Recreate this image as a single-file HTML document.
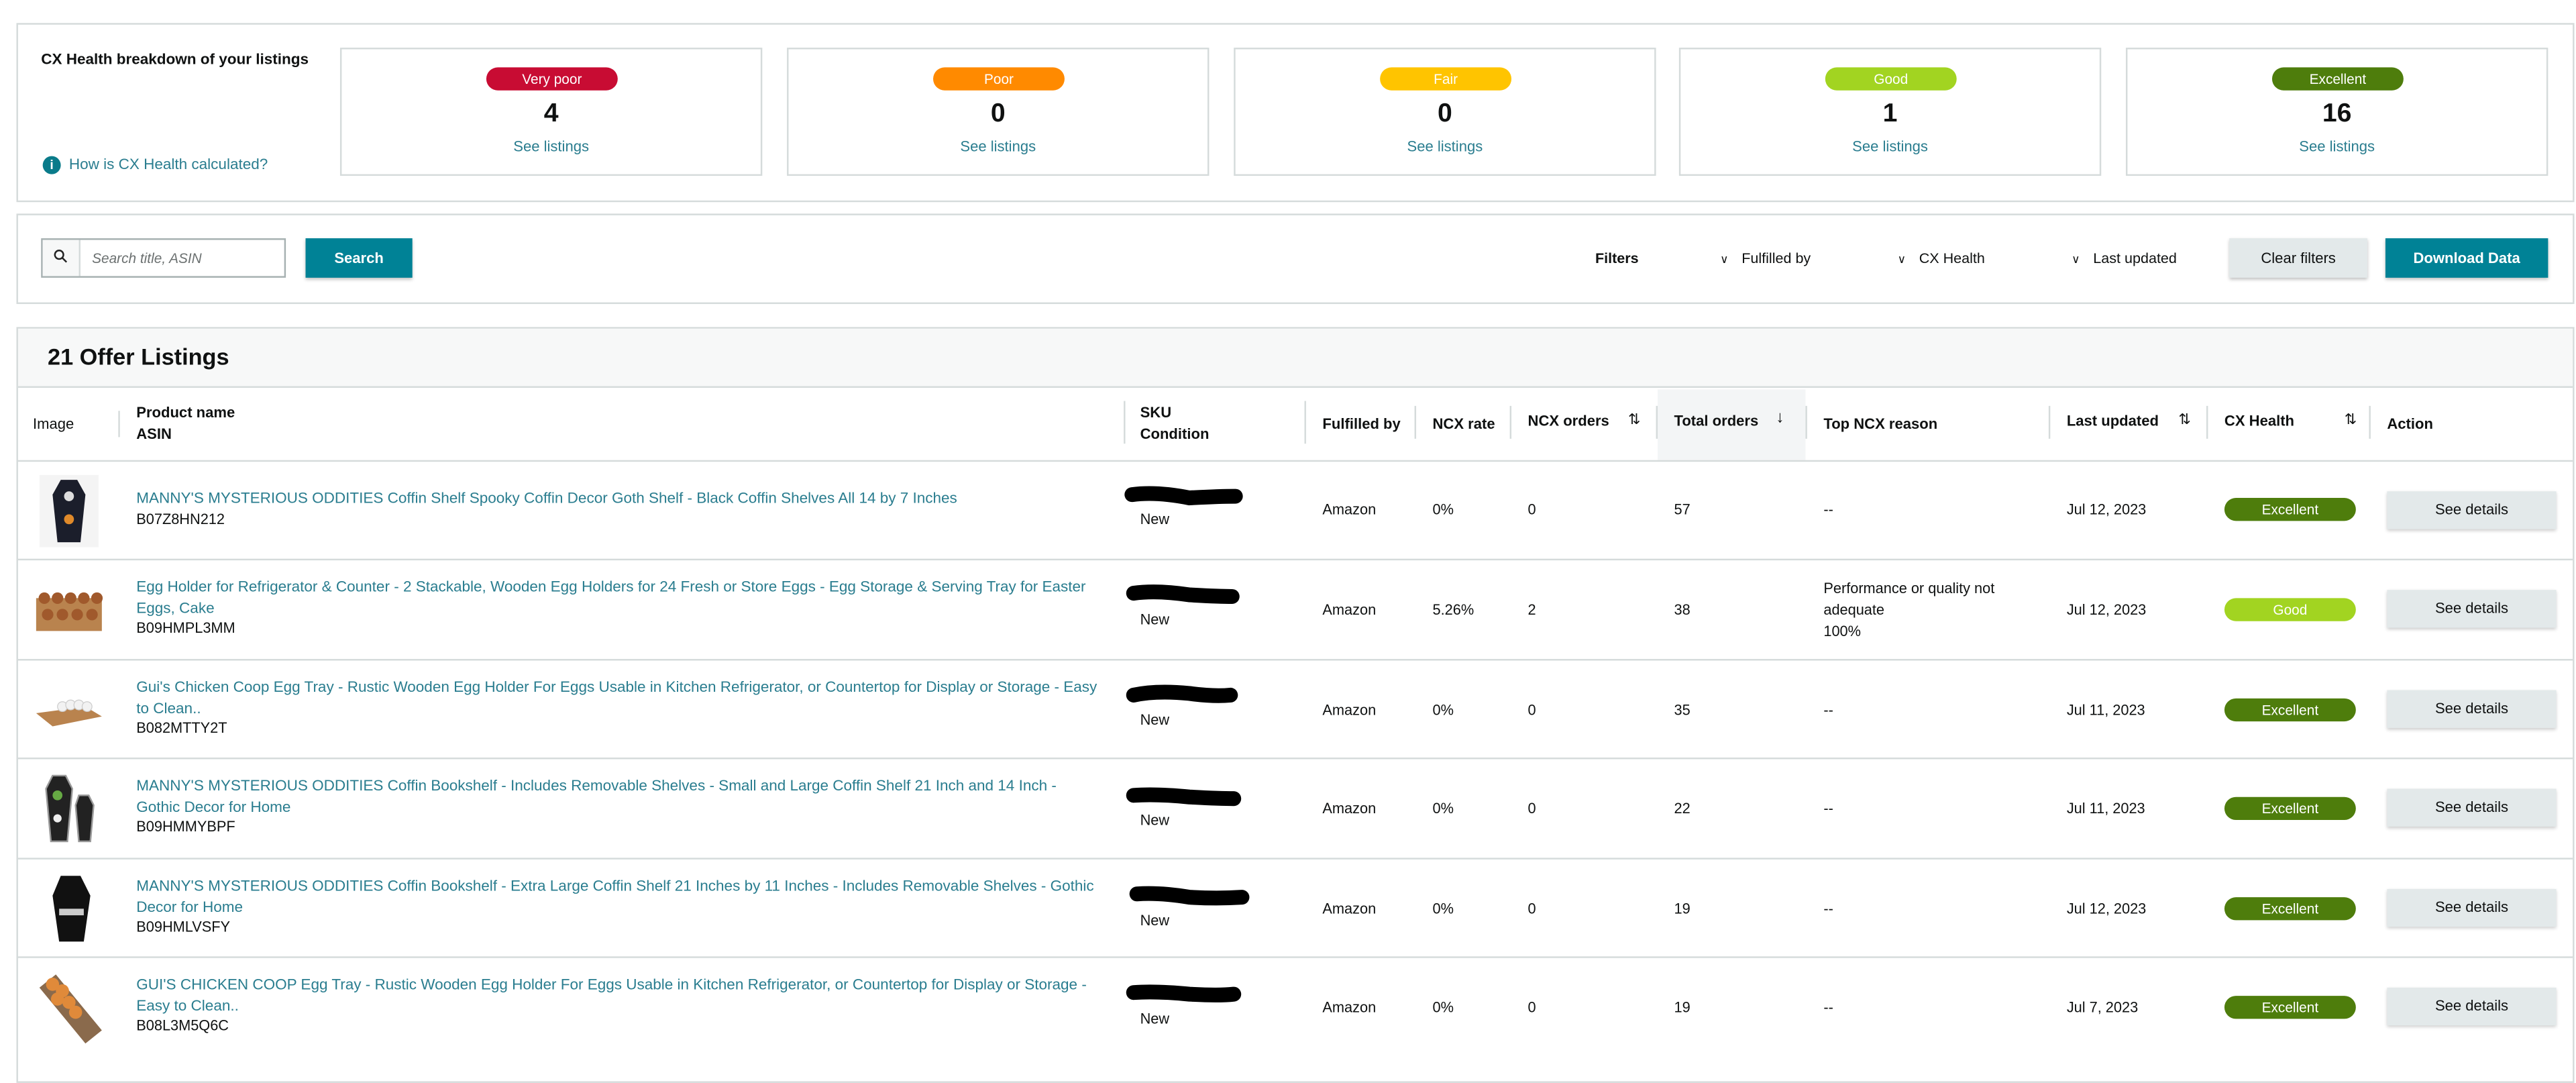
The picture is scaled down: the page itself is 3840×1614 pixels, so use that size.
<!DOCTYPE html>
<html><head><meta charset="utf-8"><style>
*{box-sizing:border-box;margin:0;padding:0}
html,body{width:3840px;height:1572px;overflow:hidden;background:#fff}
#w{position:absolute;left:0;top:0;width:1568px;height:642px;transform:scale(2.44898);transform-origin:0 0;font-family:"Liberation Sans",Arial,sans-serif;color:#0f1111;font-size:9px}
.a{position:absolute}
.card{position:absolute;border:1px solid #d5dbdb;background:#fff}
.box{position:absolute;top:29px;width:257px;height:78px;border:1px solid #d5dbdb;text-align:center}
.pill{position:absolute;left:88px;top:11px;width:80px;height:14px;border-radius:7px;color:#fff;font-size:8.5px;line-height:14px}
.num{position:absolute;left:0;right:0;top:31px;font-size:16px;font-weight:bold;color:#0f1111}
.see{position:absolute;left:0;right:0;top:54px;color:#2a7d8f;font-size:9px}
.btn{position:absolute;top:145px;height:24px;line-height:24px;text-align:center;font-size:9px;box-shadow:0 1px 2px rgba(0,0,0,.25)}
.hd{position:absolute;font-weight:bold;font-size:9px;color:#0f1111}
.sep{position:absolute;width:1px;background:#d5dbdb}
.row{position:absolute;left:10px;width:1556px;height:61px;border-top:1px solid #d5dbdb}
.c{position:absolute;font-size:8.9px;color:#0f1111}
.pn{position:absolute;left:73px;width:591px;color:#2a7d8f;font-size:9.2px;line-height:13px}
.cx{position:absolute;left:1344px;width:80px;height:14px;border-radius:7px;color:#fff;text-align:center;line-height:14px;font-size:8.5px}
.sd{position:absolute;left:1443px;width:103px;height:23px;background:#e3e9ea;line-height:23px;text-align:center;font-size:9px;box-shadow:0 1px 2px rgba(0,0,0,.2)}
.sort{font-weight:normal;font-size:10px;position:absolute}
</style></head><body><div id="w">

<div class="card" style="left:10px;top:14px;width:1557px;height:109px"></div>
<div class="a" style="left:25px;top:31px;font-weight:bold;font-size:9.2px">CX Health breakdown of your listings</div>
<div class="a" style="left:26px;top:95px;width:11px;height:11px;border-radius:50%;background:#0a7b8a;color:#fff;font-size:8px;font-weight:bold;text-align:center;line-height:11px">i</div>
<div class="a" style="left:42px;top:95px;color:#2a7d8f;font-size:9.2px">How is CX Health calculated?</div>

<div class="box" style="left:207px"><div class="pill" style="background:#c80c33">Very poor</div><div class="num">4</div><div class="see">See listings</div></div>
<div class="box" style="left:479px"><div class="pill" style="background:#ff8a00">Poor</div><div class="num">0</div><div class="see">See listings</div></div>
<div class="box" style="left:751px"><div class="pill" style="background:#ffc400">Fair</div><div class="num">0</div><div class="see">See listings</div></div>
<div class="box" style="left:1022px"><div class="pill" style="background:#a2d421">Good</div><div class="num">1</div><div class="see">See listings</div></div>
<div class="box" style="left:1294px"><div class="pill" style="background:#4e7d0c">Excellent</div><div class="num">16</div><div class="see">See listings</div></div>

<div class="card" style="left:10px;top:130px;width:1557px;height:55px"></div>
<div class="a" style="left:25px;top:145px;width:149px;height:24px;border:1px solid #a6b0b1;background:#fff"></div>
<div class="a" style="left:26px;top:146px;width:23px;height:22px;background:#f7f8f8;border-right:1px solid #d5dbdb"></div>
<svg class="a" style="left:32px;top:151px" width="10" height="10" viewBox="0 0 10 10"><circle cx="4" cy="4" r="2.6" fill="none" stroke="#222" stroke-width="1"/><path d="M6 6l2.5 2.5" stroke="#222" stroke-width="1"/></svg>
<div class="a" style="left:56px;top:152px;font-style:italic;color:#6b7070;font-size:8.5px">Search title, ASIN</div>
<div class="btn" style="left:186px;width:65px;background:#008296;color:#fff;font-weight:bold">Search</div>
<div class="a" style="left:971px;top:152px;font-weight:bold;font-size:8.8px">Filters</div>
<div class="a" style="left:1047px;top:152px;font-size:8.8px"><span style="font-size:7px;margin-right:8px">&#8744;</span>Fulfilled by</div>
<div class="a" style="left:1155px;top:152px;font-size:8.8px"><span style="font-size:7px;margin-right:8px">&#8744;</span>CX Health</div>
<div class="a" style="left:1261px;top:152px;font-size:8.8px"><span style="font-size:7px;margin-right:8px">&#8744;</span>Last updated</div>
<div class="btn" style="left:1357px;width:84px;background:#e3e9ea">Clear filters</div>
<div class="btn" style="left:1452px;width:99px;background:#008296;color:#fff;font-weight:bold">Download Data</div>

<div class="card" style="left:10px;top:199px;width:1557px;height:460px"></div>
<div class="a" style="left:11px;top:200px;width:1555px;height:36px;background:#f7f8f8;border-bottom:1px solid #d5dbdb"></div>
<div class="a" style="left:29px;top:209px;font-size:14px;font-weight:bold">21 Offer Listings</div>
<div class="a" style="left:1009px;top:237px;width:90px;height:43px;background:#f3f5f6"></div>
<div class="hd" style="left:20px;top:253px;font-weight:normal">Image</div>
<div class="sep" style="left:72px;top:250px;height:16px"></div>
<div class="hd" style="left:83px;top:246px">Product name</div><div class="hd" style="left:83px;top:259px">ASIN</div>
<div class="sep" style="left:684px;top:244px;height:26px"></div>
<div class="hd" style="left:694px;top:246px">SKU</div><div class="hd" style="left:694px;top:259px">Condition</div>
<div class="sep" style="left:794px;top:244px;height:26px"></div>
<div class="hd" style="left:805px;top:253px">Fulfilled by</div>
<div class="sep" style="left:861px;top:247px;height:20px"></div>
<div class="hd" style="left:872px;top:253px">NCX rate</div>
<div class="sep" style="left:919px;top:247px;height:20px"></div>
<div class="hd" style="left:930px;top:251px">NCX orders</div><span class="sort" style="left:991px;top:250px;font-size:9px">&#8645;</span>
<div class="sep" style="left:1008px;top:247px;height:20px"></div>
<div class="hd" style="left:1019px;top:251px">Total orders</div><span class="sort" style="left:1081px;top:249px">&#8595;</span>
<div class="sep" style="left:1099px;top:247px;height:20px"></div>
<div class="hd" style="left:1110px;top:253px">Top NCX reason</div>
<div class="sep" style="left:1247px;top:247px;height:20px"></div>
<div class="hd" style="left:1258px;top:251px">Last updated</div><span class="sort" style="left:1326px;top:250px;font-size:9px">&#8645;</span>
<div class="sep" style="left:1343px;top:247px;height:20px"></div>
<div class="hd" style="left:1354px;top:251px">CX Health</div><span class="sort" style="left:1427px;top:250px;font-size:9px">&#8645;</span>
<div class="sep" style="left:1442px;top:247px;height:20px"></div>
<div class="hd" style="left:1453px;top:253px">Action</div>

<!-- row 1 -->
<div class="row" style="top:280px">
 <svg class="a" style="left:14px;top:8px" width="36" height="44"><rect x="0" y="0" width="36" height="44" fill="#f4f4f4"/><path d="M13 3h10l5 9-3 29H11L8 12z" fill="#1b1e2b"/><circle cx="18" cy="13" r="3" fill="#ddd"/><circle cx="18" cy="27" r="3" fill="#e08a2a"/></svg>
 <div class="pn" style="top:16px">MANNY'S MYSTERIOUS ODDITIES Coffin Shelf Spooky Coffin Decor Goth Shelf - Black Coffin Shelves All 14 by 7 Inches</div>
 <div class="c" style="left:73px;top:30px">B07Z8HN212</div>
 <svg class="a" style="left:674px;top:14px" width="75" height="16"><path d="M5 6 Q20 4 40 8 Q58 7 68 7" stroke="#000" stroke-width="9" stroke-linecap="round" fill="none"/></svg>
 <div class="c" style="left:684px;top:30px">New</div>
 <div class="c" style="left:795px;top:24px">Amazon</div><div class="c" style="left:862px;top:24px">0%</div><div class="c" style="left:920px;top:24px">0</div><div class="c" style="left:1009px;top:24px">57</div><div class="c" style="left:1100px;top:24px">--</div><div class="c" style="left:1248px;top:24px">Jul 12, 2023</div>
 <div class="cx" style="top:22px;background:#4e7d0c">Excellent</div><div class="sd" style="top:18px">See details</div>
</div>
<!-- row 2 -->
<div class="row" style="top:340px">
 <svg class="a" style="left:10px;top:15px" width="44" height="30"><path d="M2 8h40v20H2z" fill="#b9834e"/><g fill="#a0592c"><circle cx="7" cy="8" r="3.5"/><circle cx="15" cy="8" r="3.5"/><circle cx="23" cy="8" r="3.5"/><circle cx="31" cy="8" r="3.5"/><circle cx="39" cy="8" r="3.5"/><circle cx="9" cy="18" r="3.5"/><circle cx="18" cy="18" r="3.5"/><circle cx="27" cy="18" r="3.5"/><circle cx="36" cy="18" r="3.5"/></g></svg>
 <div class="pn" style="top:10px">Egg Holder for Refrigerator &amp; Counter - 2 Stackable, Wooden Egg Holders for 24 Fresh or Store Eggs - Egg Storage &amp; Serving Tray for Easter Eggs, Cake</div>
 <div class="c" style="left:73px;top:36px">B09HMPL3MM</div>
 <svg class="a" style="left:674px;top:14px" width="75" height="16"><path d="M6 6 Q20 4 40 7 Q58 8 66 8" stroke="#000" stroke-width="9" stroke-linecap="round" fill="none"/></svg>
 <div class="c" style="left:684px;top:31px">New</div>
 <div class="c" style="left:795px;top:25px">Amazon</div><div class="c" style="left:862px;top:25px">5.26%</div><div class="c" style="left:920px;top:25px">2</div><div class="c" style="left:1009px;top:25px">38</div>
 <div class="c" style="left:1100px;top:11px;line-height:13px">Performance or quality not<br>adequate<br>100%</div>
 <div class="c" style="left:1248px;top:25px">Jul 12, 2023</div>
 <div class="cx" style="top:23px;background:#a2d421">Good</div><div class="sd" style="top:18px">See details</div>
</div>
<!-- row 3 -->
<div class="row" style="top:401px">
 <svg class="a" style="left:10px;top:18px" width="44" height="24"><path d="M2 14l30-4 10 6-30 6z" fill="#b9834e"/><g fill="#f2f2f2" stroke="#ccc" stroke-width=".5"><circle cx="18" cy="10" r="3"/><circle cx="23" cy="9" r="3"/><circle cx="28" cy="9" r="3"/><circle cx="33" cy="10" r="3"/></g></svg>
 <div class="pn" style="top:10px">Gui's Chicken Coop Egg Tray - Rustic Wooden Egg Holder For Eggs Usable in Kitchen Refrigerator, or Countertop for Display or Storage - Easy to Clean..</div>
 <div class="c" style="left:73px;top:36px">B082MTTY2T</div>
 <svg class="a" style="left:674px;top:14px" width="75" height="16"><path d="M6 7 Q20 4 40 6 Q55 8 65 7" stroke="#000" stroke-width="9" stroke-linecap="round" fill="none"/></svg>
 <div class="c" style="left:684px;top:31px">New</div>
 <div class="c" style="left:795px;top:25px">Amazon</div><div class="c" style="left:862px;top:25px">0%</div><div class="c" style="left:920px;top:25px">0</div><div class="c" style="left:1009px;top:25px">35</div><div class="c" style="left:1100px;top:25px">--</div><div class="c" style="left:1248px;top:25px">Jul 11, 2023</div>
 <div class="cx" style="top:23px;background:#4e7d0c">Excellent</div><div class="sd" style="top:18px">See details</div>
</div>
<!-- row 4 -->
<div class="row" style="top:461px">
 <svg class="a" style="left:14px;top:8px" width="36" height="44"><path d="M8 2h8l4 8-3 32H7L4 10z" fill="#222" stroke="#999"/><path d="M24 14h6l3 6-2 22h-7l-2-22z" fill="#222" stroke="#999"/><circle cx="11" cy="14" r="3" fill="#6a4"/><circle cx="11" cy="28" r="2.5" fill="#eee"/></svg>
 <div class="pn" style="top:10px">MANNY'S MYSTERIOUS ODDITIES Coffin Bookshelf - Includes Removable Shelves - Small and Large Coffin Shelf 21 Inch and 14 Inch -<br>Gothic Decor for Home</div>
 <div class="c" style="left:73px;top:36px">B09HMMYBPF</div>
 <svg class="a" style="left:674px;top:16px" width="75" height="16"><path d="M6 6 Q20 5 40 7 Q58 8 67 8" stroke="#000" stroke-width="9" stroke-linecap="round" fill="none"/></svg>
 <div class="c" style="left:684px;top:32px">New</div>
 <div class="c" style="left:795px;top:25px">Amazon</div><div class="c" style="left:862px;top:25px">0%</div><div class="c" style="left:920px;top:25px">0</div><div class="c" style="left:1009px;top:25px">22</div><div class="c" style="left:1100px;top:25px">--</div><div class="c" style="left:1248px;top:25px">Jul 11, 2023</div>
 <div class="cx" style="top:23px;background:#4e7d0c">Excellent</div><div class="sd" style="top:18px">See details</div>
</div>
<!-- row 5 -->
<div class="row" style="top:522px">
 <svg class="a" style="left:18px;top:8px" width="30" height="44"><path d="M9 2h12l6 12-4 28H8L4 14z" fill="#111"/><rect x="8" y="22" width="15" height="4" fill="#ccc"/></svg>
 <div class="pn" style="top:10px">MANNY'S MYSTERIOUS ODDITIES Coffin Bookshelf - Extra Large Coffin Shelf 21 Inches by 11 Inches - Includes Removable Shelves - Gothic Decor for Home</div>
 <div class="c" style="left:73px;top:36px">B09HMLVSFY</div>
 <svg class="a" style="left:676px;top:15px" width="78" height="16"><path d="M6 6 Q20 5 38 8 Q55 9 70 8" stroke="#000" stroke-width="9" stroke-linecap="round" fill="none"/></svg>
 <div class="c" style="left:684px;top:32px">New</div>
 <div class="c" style="left:795px;top:25px">Amazon</div><div class="c" style="left:862px;top:25px">0%</div><div class="c" style="left:920px;top:25px">0</div><div class="c" style="left:1009px;top:25px">19</div><div class="c" style="left:1100px;top:25px">--</div><div class="c" style="left:1248px;top:25px">Jul 12, 2023</div>
 <div class="cx" style="top:23px;background:#4e7d0c">Excellent</div><div class="sd" style="top:18px">See details</div>
</div>
<!-- row 6 -->
<div class="row" style="top:582px">
 <svg class="a" style="left:10px;top:8px" width="44" height="46"><path d="M4 10l10-8 28 34-10 8z" fill="#8a6a4c"/><g fill="#e08a3a"><circle cx="12" cy="8" r="4"/><circle cx="18" cy="12" r="4"/><circle cx="15" cy="17" r="4"/><circle cx="22" cy="19" r="4"/><circle cx="26" cy="25" r="4"/></g></svg>
 <div class="pn" style="top:10px">GUI'S CHICKEN COOP Egg Tray - Rustic Wooden Egg Holder For Eggs Usable in Kitchen Refrigerator, or Countertop for Display or Storage - Easy to Clean..</div>
 <div class="c" style="left:73px;top:36px">B08L3M5Q6C</div>
 <svg class="a" style="left:674px;top:15px" width="75" height="16"><path d="M6 6 Q20 5 40 7 Q58 8 67 7" stroke="#000" stroke-width="9" stroke-linecap="round" fill="none"/></svg>
 <div class="c" style="left:684px;top:32px">New</div>
 <div class="c" style="left:795px;top:25px">Amazon</div><div class="c" style="left:862px;top:25px">0%</div><div class="c" style="left:920px;top:25px">0</div><div class="c" style="left:1009px;top:25px">19</div><div class="c" style="left:1100px;top:25px">--</div><div class="c" style="left:1248px;top:25px">Jul 7, 2023</div>
 <div class="cx" style="top:23px;background:#4e7d0c">Excellent</div><div class="sd" style="top:18px">See details</div>
</div>

</div></body></html>
